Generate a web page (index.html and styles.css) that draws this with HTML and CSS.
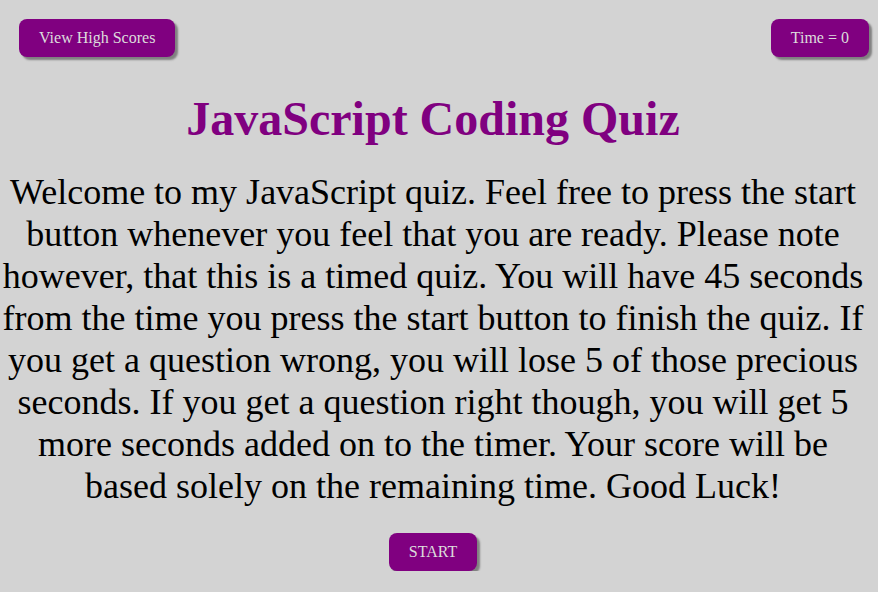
FILE: index.html
```html
<!DOCTYPE html>
<html>
<head>
<meta charset="utf-8">
<link rel="stylesheet" href="styles.css">
</head>
<body>
<header class="top">
  <button class="btn">View High Scores</button>
  <button class="btn">Time = 0</button>
</header>
<main class="content">
  <h1 class="title">JavaScript Coding Quiz</h1>
  <p class="intro">Welcome to my JavaScript quiz. Feel free to press the start button whenever you feel that you are ready. Please note however, that this is a timed quiz. You will have 45 seconds from the time you press the start button to finish the quiz. If you get a question wrong, you will lose 5 of those precious seconds. If you get a question right though, you will get 5 more seconds added on to the timer. Your score will be based solely on the remaining time. Good Luck!</p>
  <button class="btn start">START</button>
</main>
</body>
</html>
```
FILE: styles.css
```css
html, body {
  margin: 0;
  padding: 0;
  background: #d3d3d3;
  font-family: "Liberation Serif", "Times New Roman", serif;
}
body {
  padding: 19px 9px 0 19px;
}
.top {
  display: flex;
  justify-content: space-between;
  align-items: flex-start;
}
.btn {
  font-family: "Liberation Serif", "Times New Roman", serif;
  font-size: 16px;
  color: #dcdcdc;
  background: #800080;
  border: none;
  border-radius: 8px;
  height: 38px;
  padding: 0 20px;
  box-shadow: 3px 3px 2px #808080;
  cursor: pointer;
}
.content {
  display: flex;
  flex-direction: column;
  align-items: center;
  margin-left: -19px;
  margin-right: 3px;
}
.title {
  color: #800080;
  font-size: 48px;
  font-weight: bold;
  margin: 36px 0 0;
  line-height: 52px;
}
.intro {
  font-size: 36px;
  text-align: center;
  margin: 26px 0 0;
  line-height: 42px;
  color: #000;
}
.start {
  margin-top: 26px;
}
```
